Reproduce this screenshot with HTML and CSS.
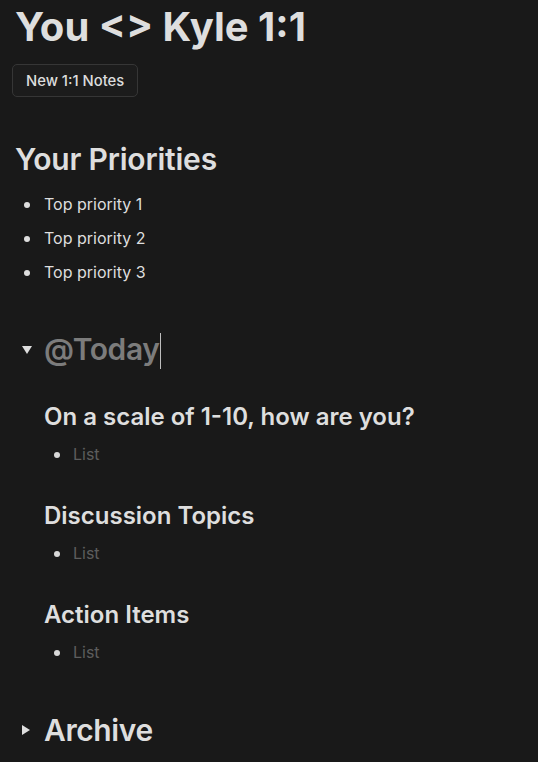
FILE: index.html
```html
<!DOCTYPE html>
<html>
<head>
<meta charset="utf-8">
<link rel="stylesheet" href="styles.css">
</head>
<body>
<main class="page">
  <h1 class="title">You &lt;&gt; Kyle 1:1</h1>
  <button class="btn">New 1:1 Notes</button>

  <h2 class="h2">Your Priorities</h2>
  <ul class="bullets">
    <li>Top priority 1</li>
    <li>Top priority 2</li>
    <li>Top priority 3</li>
  </ul>

  <section class="toggle">
    <div class="toggle-head">
      <span class="tri down"></span>
      <span class="toggle-title placeholder-title">@Today<span class="caret"></span></span>
    </div>
    <div class="toggle-body">
      <h3 class="h3">On a scale of 1-10, how are you?</h3>
      <ul class="bullets sub"><li>List</li></ul>
      <h3 class="h3">Discussion Topics</h3>
      <ul class="bullets sub"><li>List</li></ul>
      <h3 class="h3">Action Items</h3>
      <ul class="bullets sub"><li>List</li></ul>
    </div>
  </section>

  <section class="toggle archive">
    <div class="toggle-head">
      <span class="tri right"></span>
      <span class="toggle-title">Archive</span>
    </div>
  </section>
</main>
</body>
</html>
```
FILE: styles.css
```css
html, body {
  margin: 0;
  background: #191919;
}
body {
  font-family: Inter, "Noto Sans", sans-serif;
  color: #dedede;
}
.page {
  padding: 3px 15px 0 15px;
}
.title {
  margin: 0;
  font-size: 40px;
  line-height: 48px;
  font-weight: 700;
  letter-spacing: 0;
}
.btn {
  display: block;
  margin: 13px 0 0 -3px;
  height: 33px;
  padding: 0 13px;
  background: #1c1c1c;
  border: 1px solid #363636;
  border-radius: 5px;
  color: #dcdcdc;
  font-family: Inter, sans-serif;
  font-size: 14.8px;
  font-weight: 500;
}
.h2 {
  margin: 44px 0 0 0;
  font-size: 30px;
  line-height: 36px;
  font-weight: 600;
  letter-spacing: -0.2px;
}
.bullets {
  list-style: none;
  margin: 10px 0 0 0;
  padding: 0;
}
.bullets li {
  position: relative;
  padding-left: 29px;
  font-size: 16px;
  line-height: 34px;
}
.bullets li::before {
  content: "";
  position: absolute;
  left: 9px;
  top: 15px;
  width: 6px;
  height: 6px;
  border-radius: 50%;
  background: #dedede;
}
.toggle {
  margin-top: 40px;
}
.toggle-head {
  display: flex;
  align-items: center;
  height: 42px;
}
.tri {
  width: 29px;
  display: flex;
  justify-content: flex-start;
  padding-left: 7px;
  box-sizing: border-box;
}
.tri.down::before {
  content: "";
  border-left: 5px solid transparent;
  border-right: 5px solid transparent;
  border-top: 8px solid #dedede;
}
.tri.right::before {
  content: "";
  border-top: 5px solid transparent;
  border-bottom: 5px solid transparent;
  border-left: 8px solid #dedede;
}
.toggle-title {
  font-size: 30px;
  font-weight: 600;
  letter-spacing: -0.4px;
  position: relative;
}
.placeholder-title {
  color: #7c7c7c;
}
.caret {
  display: inline-block;
  width: 1px;
  height: 36px;
  background: #bdbdbd;
  vertical-align: middle;
  margin-left: 1px;
}
.toggle-body {
  padding-left: 29px;
  padding-top: 30px;
}
.h3 {
  margin: 0;
  font-size: 24px;
  line-height: 32px;
  font-weight: 600;
  letter-spacing: 0;
}
.h3 + .bullets {
  margin-top: 4px;
}
.bullets.sub + .h3 {
  margin-top: 29px;
}
.bullets.sub li {
  color: #5d5d5d;
  padding-left: 29px;
}
.bullets.sub li::before {
  left: 10px;
  background: #d8d8d8;
}
.archive {
  margin-top: 40px;
}
.archive .toggle-title {
  color: #dedede;
}
```
